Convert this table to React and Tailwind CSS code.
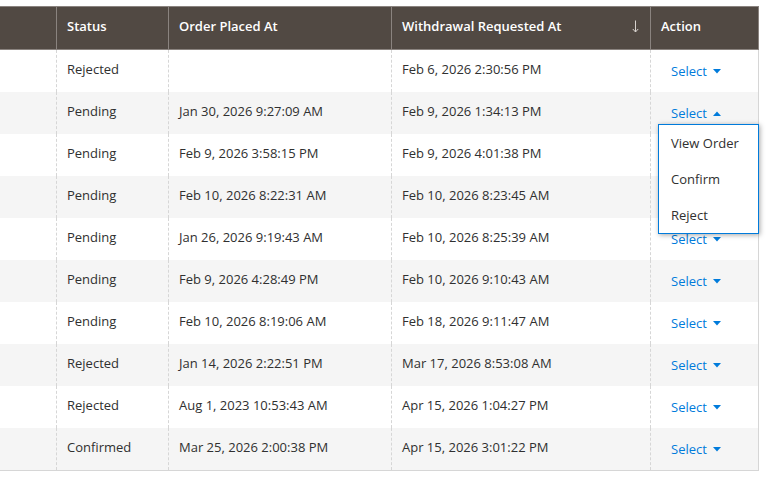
// App.jsx
const rows = [
  ["Rejected", "", "Feb 6, 2026 2:30:56 PM"],
  ["Pending", "Jan 30, 2026 9:27:09 AM", "Feb 9, 2026 1:34:13 PM"],
  ["Pending", "Feb 9, 2026 3:58:15 PM", "Feb 9, 2026 4:01:38 PM"],
  ["Pending", "Feb 10, 2026 8:22:31 AM", "Feb 10, 2026 8:23:45 AM"],
  ["Pending", "Jan 26, 2026 9:19:43 AM", "Feb 10, 2026 8:25:39 AM"],
  ["Pending", "Feb 9, 2026 4:28:49 PM", "Feb 10, 2026 9:10:43 AM"],
  ["Pending", "Feb 10, 2026 8:19:06 AM", "Feb 18, 2026 9:11:47 AM"],
  ["Rejected", "Jan 14, 2026 2:22:51 PM", "Mar 17, 2026 8:53:08 AM"],
  ["Rejected", "Aug 1, 2023 10:53:43 AM", "Apr 15, 2026 1:04:27 PM"],
  ["Confirmed", "Mar 25, 2026 2:00:38 PM", "Apr 15, 2026 3:01:22 PM"],
];

function Caret({ up }) {
  return (
    <svg width="8" height="5" viewBox="0 0 8 5" className="ml-[6px]">
      {up ? (
        <path d="M0 5 L4 0.5 L8 5 Z" fill="#007bdb" />
      ) : (
        <path d="M0 0 L8 0 L4 4.5 Z" fill="#007bdb" />
      )}
    </svg>
  );
}

function ActionMenu() {
  return (
    <div className="absolute left-[7px] top-[32px] z-10 w-[101px] border border-[#007bdb] bg-white shadow-[1px_1px_5px_rgba(0,0,0,0.35)]">
      {["View Order", "Confirm", "Reject"].map((t) => (
        <div key={t} className="flex h-[36px] items-center pl-[12px] pt-[2px] text-[13px] text-[#303030]">
          {t}
        </div>
      ))}
    </div>
  );
}

export default function App() {
  return (
    <div
      className="h-[482px] w-[768px] bg-white pt-[6px]"
      style={{ fontFamily: '"Open Sans", "Liberation Sans", sans-serif' }}
    >
      <div className="w-[759px]">
        {/* header */}
        <div className="flex h-[44px] border-y border-r border-[#8a837f] bg-[#514943] text-[13px] font-semibold text-white">
          <div className="w-[56px]" />
          <div className="flex w-[112px] items-center border-l border-[#8a837f] pb-[3px] pl-[10px]">Status</div>
          <div className="flex w-[223px] items-center border-l border-[#8a837f] pb-[3px] pl-[10px]">Order Placed At</div>
          <div className="flex w-[259px] items-center justify-between border-l border-[#8a837f] pb-[3px] pl-[10px] pr-[11px]">
            <span>Withdrawal Requested At</span>
            <svg width="7" height="13" viewBox="0 0 7 13">
              <path d="M3.5 0.5 V12 M0.8 9 L3.5 12 L6.2 9" stroke="#d8d3cf" strokeWidth="1" fill="none" />
            </svg>
          </div>
          <div className="flex flex-1 items-center border-l border-[#8a837f] pb-[3px] pl-[10px]">Action</div>
        </div>

        {/* body */}
        <div className="border-b border-r border-[#d6d6d6] text-[13px] text-[#303030]">
          {rows.map((r, i) => (
            <div key={i} className={`flex h-[42px] ${i % 2 ? "bg-[#f5f5f5]" : "bg-white"}`}>
              <div className="w-[56px]" />
              <div className="flex w-[112px] items-center border-l border-dashed border-[#d6d6d6] pb-[3px] pl-[10px]">{r[0]}</div>
              <div className="flex w-[223px] items-center border-l border-dashed border-[#d6d6d6] pb-[3px] pl-[10px]">{r[1]}</div>
              <div className="flex w-[259px] items-center border-l border-dashed border-[#d6d6d6] pb-[3px] pl-[10px]">{r[2]}</div>
              <div className="relative flex flex-1 items-center border-l border-dashed border-[#d6d6d6] pl-[20px] pt-[1px]">
                <span className="flex items-center text-[#007bdb]">
                  Select
                  <Caret up={i === 1} />
                </span>
                {i === 1 && <ActionMenu />}
              </div>
            </div>
          ))}
        </div>
      </div>
    </div>
  );
}
